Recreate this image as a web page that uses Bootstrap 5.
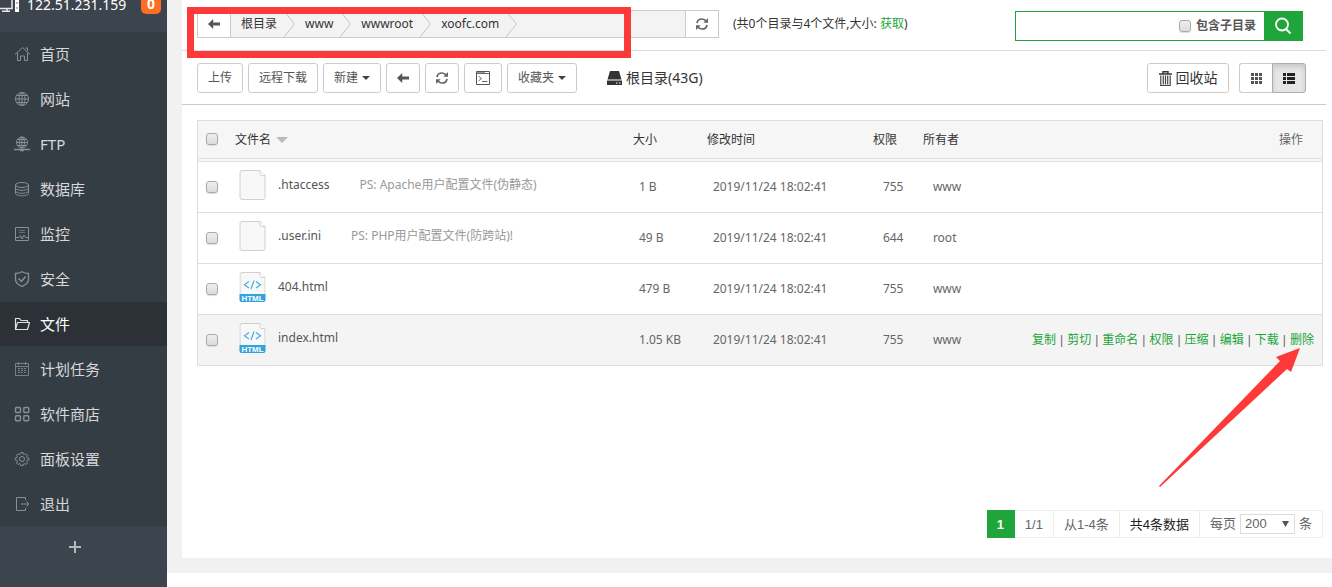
<!DOCTYPE html>
<html lang="zh-CN">
<head>
<meta charset="utf-8">
<meta name="viewport" content="width=device-width, initial-scale=1">
<title>文件</title>
<link rel="stylesheet" href="https://cdn.jsdelivr.net/npm/bootstrap@5.3.0/dist/css/bootstrap.min.css">
<style>
:root{--green:#20a53a;--line:#ddd}
body{font-family:"Noto Sans","Noto Sans CJK SC",sans-serif;font-size:12px;line-height:18px;color:#333;background:#fff}
svg{display:block;flex:none}
a{text-decoration:none}
/* sidebar */
.side{width:167px;flex:none;background:#3c444d;overflow:hidden}
.side-head{height:32px;color:#fff;font-size:14px;line-height:10px}
.side-head .host{margin-left:7px}
.msg-count{width:20px;height:20px;line-height:20px;border-radius:5px;background:#ff6c23;font-weight:700;text-align:center;margin:-6px 6px 0 auto}
.side-menu{background:#353d44;gap:1px}
.side-menu a{height:44px;padding-left:14px;gap:10px;color:#d6d7d9;font-size:15px;line-height:24px}
.side-menu a.active{background:#2c3138;color:#fff}
.side-menu svg{width:16px;height:16px;fill:none;stroke:#8b8f93}
.side-menu a.active svg{stroke:#e0e0e0}
.add-btn{height:42px;width:149px;background:none;border:0;padding:0;color:#b5b8bb}
/* main */
.main-area{background:#f1f1f1;padding:0 0 15px 15px;margin-bottom:14px;min-width:0}
.panel{background:#fff;padding-bottom:20px}
.bar{margin-right:6px;padding-left:15px}
.path-bar{height:51px;border-bottom:1px solid var(--line);padding-top:10px;padding-right:23px}
.tool-bar{height:54px;border-bottom:1px solid #ccc;padding-top:12px;padding-right:20px}
.path-box{width:522px;height:28px;border:1px solid #ccc;background:#f3f3f3}
.path-box button{width:33px;border:0;background:#fff;padding:0}
.path-box .go-up{border-right:1px solid #ccc}
.path-box .reload{border-left:1px solid #ccc}
.crumb{color:#333;padding:0 7px 0 10px}
.frame-mark{position:absolute;left:-11px;top:-4px;width:444px;height:51px;border:7px solid #fd3939;pointer-events:none}
.green{color:var(--green)}
.path-info{margin:5px 0 0 14px}
.search-box{width:288px;height:30px;margin-top:1px;border:1px solid var(--green)}
.search-box input[type=search]{border:0;outline:0;min-width:0;width:0;padding:0 6px}
.search-box label{font-weight:700;color:#555;margin:0 8px 0 5px}
.search-box button{width:38px;flex:none;border:0;padding:0;background:var(--green)}
.tool-set{gap:5px}
.tool{height:30px;padding:0 10px;border:1px solid #ccc;border-radius:3px;background:#fff;color:#555;font-size:12px;line-height:18px;display:inline-flex;align-items:center;justify-content:center;gap:4px}
.tool:hover{background:#eee;border-color:#bbb}
.tool.sq{width:34px;padding:0}
.tool.term{width:38px;padding:0}
.tool.big{font-size:14px;color:#333;padding:0;width:82px;margin-right:10px}
.tool.on{background:#e6e6e6;border-color:#adadad;box-shadow:inset 0 3px 5px rgba(0,0,0,.125)}
.tool.grid-view{width:33px}
.caret{width:0;border:4px solid transparent;border-top-color:#444;border-bottom:0}
.disk{margin-left:30px;font-size:14px;gap:4px;height:30px}
.tick{appearance:none;width:12px;height:12px;margin:0;border:1px solid #aaa;border-radius:3px;background:linear-gradient(#eee,#dcdcdc);display:block;flex:none;box-shadow:0 1px 1px #ddd}
.tick:checked{background:#777}
/* file table */
.file-wrap{margin:15px 9px 20px 15px}
.file-list{width:100%;table-layout:fixed;border-collapse:separate;border-spacing:0;border:1px solid var(--line)}
.file-list th{height:41px;padding:0 8px;font-weight:400;background:#f6f6f6;border-bottom:4px double #e2e2e2}
.file-list td{height:51px;padding:0 8px;color:#666;border-bottom:1px solid var(--line)}
.file-list tr:last-child td{border-bottom:0;height:50px;background:#f4f4f4}
.file-list td:nth-child(2){padding:0 8px 4px 12px}
.file-list td:nth-child(1){padding-bottom:1px}
.file-list th:nth-child(1){padding-bottom:1px}
.file-list td:nth-child(3),.file-list td:nth-child(4){padding-left:14px}
.file-list td:nth-child(5),.file-list td:nth-child(6){padding-left:18px}
.file-list th:last-child{color:#666;padding-right:19px}
.c-tick{width:29px}.c-name{width:35.4%}.c-size{width:74px}.c-time{width:166px}.c-mode{width:50px}.c-own{width:60px}
.head-name{gap:5px}
.sort{width:0;border:6px solid transparent;border-top-color:#bbb;border-bottom:0}
.fname{color:#555;margin:0 30px 0 12px}
.note{color:#999}
.acts i{font:12px/18px "Liberation Sans",sans-serif;margin:0 4px}
.arrow-mark{position:absolute;right:22px;bottom:-122px;pointer-events:none}
/* pager */
.pager{margin-right:9px;height:28px;font:13px/28px "Liberation Sans","Noto Sans CJK SC",sans-serif;color:#666}
.pager>span{border:1px solid #ececec;border-left:0;padding:0 10px}
.pager>.cur{background:var(--green);border-color:var(--green);color:#fff;font-weight:700}
.pager .total{color:#222}
.pager select{appearance:none;width:55px;height:20px;border:1px solid #ddd;padding:0 4px;margin:0 4px;font:inherit;line-height:18px;color:#666;background:#fff}
.pick{position:relative}
.pick svg{position:absolute;right:10px;top:7px;pointer-events:none}
</style>
</head>
<body>
<svg class="d-none" xmlns="http://www.w3.org/2000/svg">
  <symbol id="i-left" viewBox="0 0 12 10"><path d="M0 5 5.2 0v3.5H12v3H5.2V10z" fill="#555"/></symbol>
  <symbol id="i-reload" viewBox="0 0 14 14"><g fill="none" stroke="#666" stroke-width="1.7"><path d="M2 6.2C2.300 3.700 4.500 2 7 2c1.900 0 3.300.9 4.200 2.300M12 7.800C11.700 10.300 9.500 12 7 12c-1.900 0-3.300-.9-4.200-2.300"/></g><path d="M13 1v4.800H8.300zM1 13V8.200h4.700z" fill="#666"/></symbol>
  <symbol id="i-file" viewBox="0 0 26 30"><path d="M2.500.5h18l5 5v22a2 2 0 0 1-2 2h-21a2 2 0 0 1-2-2v-25a2 2 0 0 1 2-2z" fill="#f8f8f8" stroke="#d0d0d0"/><path d="M20.500.5v3a2 2 0 0 0 2 2h3" fill="#fff" stroke="#d0d0d0"/></symbol>
  <symbol id="i-code" viewBox="0 0 26 30"><use href="#i-file"/><path d="M0 22h26v6a2 2 0 0 1-2 2H2a2 2 0 0 1-2-2z" fill="#33a3dc"/><path d="M9.500 9.500 5 12.800l4.500 3.300M16.500 9.500l4.500 3.300-4.500 3.300M14.500 8.500l-3 8.500" fill="none" stroke="#45aee0" stroke-width="1.200"/><text x="13" y="29" text-anchor="middle" font-family="Liberation Sans, sans-serif" font-size="8" font-weight="700" fill="#fff">HTML</text></symbol>
</svg>
<div class="d-flex min-vh-100">
  <nav class="side">
    <div class="side-head d-flex align-items-start">
      <svg width="20" height="12" viewBox="0 0 20 12"><g fill="none" stroke="#e8e8e8" stroke-width="1.500"><path d="M0 8.500h12V0M7 8v3M2 11.200h8"/></g><path d="M15 0h4v12h-4z" fill="#fff"/><path d="M16 3h2M16 8h2" stroke="#777"/></svg>
      <span class="host">122.51.231.159</span>
      <span class="msg-count">0</span>
    </div>
    <div class="side-menu d-flex flex-column">
      <a class="d-flex align-items-center" href="#"><svg viewBox="0 0 16 16"><path d="M1 8.500 8.500 1.500 16 8.500M3.500 7v7.500h3V10h4v4.500h3V7M11.500 2h2v3"/></svg>首页</a>
      <a class="d-flex align-items-center" href="#"><svg viewBox="0 0 16 16"><circle cx="8" cy="8" r="6.500"/><ellipse cx="8" cy="8" rx="3" ry="6.500"/><path d="M8 1.500v13M1.500 8h13M2.500 4.500h11M2.500 11.500h11"/></svg>网站</a>
      <a class="d-flex align-items-center" href="#"><svg viewBox="0 0 16 16"><circle cx="8" cy="6.500" r="5.500"/><ellipse cx="8" cy="6.500" rx="2.500" ry="5.500"/><path d="M8 1v11M2.500 6.500h11M3.500 3.500h9M3.500 9.500h9"/><path d="M0 13.500h16M6 14.500h4" stroke-width="1.500"/></svg>FTP</a>
      <a class="d-flex align-items-center" href="#"><svg viewBox="0 0 16 16"><ellipse cx="8" cy="4" rx="6.500" ry="2.500"/><path d="M1.500 4v8.500c0 1.300 3 2.300 6.500 2.300s6.500-1 6.500-2.300V4M1.500 7c0 1.300 3 2.300 6.500 2.300s6.500-1 6.500-2.300M1.500 10c0 1.300 3 2.300 6.500 2.300s6.500-1 6.500-2.300"/></svg>数据库</a>
      <a class="d-flex align-items-center" href="#"><svg viewBox="0 0 16 16"><path d="M1.500 1.500h13v13h-13z"/><path d="M5 4.500h6M5 6.500h6" opacity=".6"/><path d="M2 11.500h3l1.500-2L8 13l2-4 1.500 2.500H14"/></svg>监控</a>
      <a class="d-flex align-items-center" href="#"><svg viewBox="0 0 16 16"><path d="M8 .8c2 1.300 4.300 1.700 6.500 1.700v5.800c0 3-2.800 5.600-6.500 7.200-3.700-1.600-6.500-4.200-6.500-7.200V2.500C3.700 2.500 6 2.100 8 .8z" stroke-width="1.300"/><path d="m4.500 7.500 3 3 4-5" stroke-width="1.500"/></svg>安全</a>
      <a class="d-flex align-items-center active" href="#" aria-current="page"><svg viewBox="0 0 16 16"><path d="M1.500 13.500v-11h4l1.500 2h6.500v2M1.500 13.500l2-7h12l-2 7z" stroke-linejoin="round" stroke-width="1.200"/></svg>文件</a>
      <a class="d-flex align-items-center" href="#"><svg viewBox="0 0 16 16"><path d="M1.500 2.500h13v12h-13zM1.500 5.500h13M4.500 1v3M11.500 1v3" opacity=".8"/><path d="M4 7.500h9M4 9.500h9M4 11.500h9" stroke-dasharray="2 1" opacity=".8"/></svg>计划任务</a>
      <a class="d-flex align-items-center" href="#"><svg viewBox="0 0 16 16"><g stroke-width="1.400"><rect x="1.500" y="1.500" width="5" height="5" rx="1"/><rect x="9.800" y="1.500" width="5" height="5" rx="1"/><rect x="1.500" y="9.800" width="5" height="5" rx="1"/><rect x="9.800" y="9.800" width="5" height="5" rx="1"/></g></svg>软件商店</a>
      <a class="d-flex align-items-center" href="#"><svg viewBox="0 0 16 16"><circle cx="8" cy="8" r="2.500"/><path d="M6.900 1.500h2.200l.4 1.700 1 .4 1.500-.9 1.500 1.500-.9 1.500.4 1 1.700.4v2l-1.700.4-.4 1 .9 1.500-1.500 1.500-1.500-.9-1 .4-.4 1.600H6.900l-.4-1.600-1-.4-1.500.9-1.500-1.500.9-1.500-.4-1-1.700-.4v-2l1.700-.4.4-1-.9-1.500L4 2.700l1.500.9 1-.4z"/></svg>面板设置</a>
      <a class="d-flex align-items-center" href="#"><svg viewBox="0 0 16 16"><path d="M11.500 4V1.500h-9v13h9V12M7 8h8M12.500 5.500 15 8l-2.500 2.500"/></svg>退出</a>
    </div>
    <button class="add-btn d-flex align-items-center justify-content-center" type="button" aria-label="添加"><svg width="14" height="14" viewBox="0 0 14 14"><path d="M7 1v12M1 7h12" stroke="currentColor" stroke-width="2"/></svg></button>
  </nav>

  <main class="main-area flex-grow-1 d-flex flex-column">
    <div class="panel flex-grow-1 d-flex flex-column">
      <div class="bar path-bar d-flex align-items-start">
        <div class="path-box d-flex position-relative flex-shrink-0">
          <button class="go-up d-flex align-items-center justify-content-center" type="button" aria-label="返回"><svg width="12" height="10"><use href="#i-left"/></svg></button>
          <nav class="d-flex align-items-center flex-grow-1" aria-label="路径">
            <a class="crumb" href="#">根目录</a><svg width="11" height="26" viewBox="0 0 11 26"><path d="M0 0 10.500 13 0 26" fill="none" stroke="#c4c4d0"/></svg>
            <a class="crumb" href="#">www</a><svg width="11" height="26" viewBox="0 0 11 26"><path d="M0 0 10.500 13 0 26" fill="none" stroke="#c4c4d0"/></svg>
            <a class="crumb" href="#">wwwroot</a><svg width="11" height="26" viewBox="0 0 11 26"><path d="M0 0 10.500 13 0 26" fill="none" stroke="#c4c4d0"/></svg>
            <a class="crumb" href="#">xoofc.com</a><svg width="11" height="26" viewBox="0 0 11 26"><path d="M0 0 10.500 13 0 26" fill="none" stroke="#c4c4d0"/></svg>
          </nav>
          <button class="reload d-flex align-items-center justify-content-center" type="button" aria-label="刷新"><svg width="14" height="14"><use href="#i-reload"/></svg></button>
          <div class="frame-mark"></div>
        </div>
        <div class="path-info text-nowrap">(共0个目录与4个文件,大小: <a class="green" href="#">获取</a>)</div>
        <form class="search-box d-flex align-items-center ms-auto">
          <input class="flex-grow-1" type="search" aria-label="搜索">
          <input class="tick" type="checkbox" id="sub"><label class="text-nowrap" for="sub">包含子目录</label>
          <button class="align-self-stretch d-flex align-items-center justify-content-center" type="button" aria-label="搜索"><svg width="18" height="18" viewBox="0 0 18 18"><circle cx="8" cy="7.500" r="6" fill="none" stroke="#fff" stroke-width="1.800"/><path d="m12 12 4.500 4.500" stroke="#fff" stroke-width="2"/></svg></button>
        </form>
      </div>

      <div class="bar tool-bar d-flex align-items-start">
        <div class="tool-set d-flex text-nowrap">
          <button class="tool" type="button">上传</button>
          <button class="tool" type="button">远程下载</button>
          <button class="tool" type="button">新建<span class="caret"></span></button>
          <button class="tool sq" type="button" aria-label="返回"><svg width="12" height="10"><use href="#i-left"/></svg></button>
          <button class="tool sq" type="button" aria-label="刷新"><svg width="14" height="14"><use href="#i-reload"/></svg></button>
          <button class="tool term" type="button" aria-label="终端"><svg width="14" height="14" viewBox="0 0 14 14"><path d="M.5.500h13v13H.5z" fill="none" stroke="#555"/><path d="M1 2.500h12" stroke="#666"/><path d="M1 1.500h8" stroke="#999"/><path d="m2.500 5 3 2.500-3 2.500M6 10.500h5.500" fill="none" stroke="#666"/></svg></button>
          <button class="tool" type="button">收藏夹<span class="caret"></span></button>
        </div>
        <div class="disk d-flex align-items-center"><svg width="15" height="14" viewBox="0 0 15 14"><path d="M3 0h9l2.500 8.500H.5zM0 9.500h15V14H0z" fill="#333"/><path d="M9 12h1.500M12 12h1.500" stroke="#fff"/></svg>根目录(43G)</div>
        <button class="tool big ms-auto" type="button"><svg width="13" height="15" viewBox="0 0 13 15"><path d="M4 2.500V.7h5v1.800M0 3h13" fill="none" stroke="#333" stroke-width="1.400"/><path d="M1.800 4.500v10h9.400v-10M4.300 4.500v9M6.500 4.500v9M8.700 4.500v9" fill="none" stroke="#444" stroke-width="1.200"/></svg>回收站</button>
        <div class="d-flex">
          <button class="tool sq grid-view rounded-end-0 border-end-0" type="button" aria-label="图标视图"><svg width="11" height="11" viewBox="0 0 11 11"><path d="M0 0h3v3H0zM4 0h3v3H4zM8 0h3v3H8zM0 4h3v3H0zM4 4h3v3H4zM8 4h3v3H8zM0 8h3v3H0zM4 8h3v3H4zM8 8h3v3H8z" fill="#555"/></svg></button>
          <button class="tool sq on rounded-start-0" type="button" aria-label="列表视图"><svg width="12" height="11" viewBox="0 0 12 11"><path d="M0 0h3v3H0zM4 0h8v3H4zM0 4h3v3H0zM4 4h8v3H4zM0 8h3v3H0zM4 8h8v3H4z" fill="#222"/></svg></button>
        </div>
      </div>

      <div class="file-wrap position-relative">
        <table class="file-list">
          <colgroup><col class="c-tick"><col class="c-name"><col class="c-size"><col class="c-time"><col class="c-mode"><col class="c-own"><col></colgroup>
          <thead>
            <tr><th><input class="tick" type="checkbox" aria-label="全选"></th><th><span class="head-name d-flex align-items-center">文件名<span class="sort"></span></span></th><th>大小</th><th>修改时间</th><th>权限</th><th>所有者</th><th class="text-end">操作</th></tr>
          </thead>
          <tbody>
            <tr><td><input class="tick" type="checkbox" aria-label=".htaccess"></td><td><div class="d-flex align-items-center"><svg width="27" height="30"><use href="#i-file"/></svg><span class="fname">.htaccess</span><span class="note">PS: Apache用户配置文件(伪静态)</span></div></td><td>1 B</td><td>2019/11/24 18:02:41</td><td>755</td><td>www</td><td></td></tr>
            <tr><td><input class="tick" type="checkbox" aria-label=".user.ini"></td><td><div class="d-flex align-items-center"><svg width="27" height="30"><use href="#i-file"/></svg><span class="fname">.user.ini</span><span class="note">PS: PHP用户配置文件(防跨站)!</span></div></td><td>49 B</td><td>2019/11/24 18:02:41</td><td>644</td><td>root</td><td></td></tr>
            <tr><td><input class="tick" type="checkbox" aria-label="404.html"></td><td><div class="d-flex align-items-center"><svg width="27" height="30"><use href="#i-code"/></svg><span class="fname">404.html</span></div></td><td>479 B</td><td>2019/11/24 18:02:41</td><td>755</td><td>www</td><td></td></tr>
            <tr><td><input class="tick" type="checkbox" aria-label="index.html"></td><td><div class="d-flex align-items-center"><svg width="27" height="30"><use href="#i-code"/></svg><span class="fname">index.html</span></div></td><td>1.05 KB</td><td>2019/11/24 18:02:41</td><td>755</td><td>www</td><td><div class="acts d-flex justify-content-end text-nowrap"><a class="green" href="#">复制</a><i>|</i><a class="green" href="#">剪切</a><i>|</i><a class="green" href="#">重命名</a><i>|</i><a class="green" href="#">权限</a><i>|</i><a class="green" href="#">压缩</a><i>|</i><a class="green" href="#">编辑</a><i>|</i><a class="green" href="#">下载</a><i>|</i><a class="green" href="#">删除</a></div></td></tr>
          </tbody>
        </table>
        <svg class="arrow-mark" width="143" height="141" viewBox="0 0 143 141"><path d="M142 1 118 10l4 4L1 139l1 1L129 22l4 3z" fill="#fd3939"/></svg>
      </div>

      <div class="pager d-flex justify-content-end text-nowrap mt-auto">
        <span class="cur">1</span><span>1/1</span><span>从1-4条</span><span class="total">共4条数据</span>
        <span class="d-flex align-items-center">每页<span class="pick d-flex"><select aria-label="每页条数"><option>200</option><option>100</option></select><svg width="7" height="6" viewBox="0 0 7 6"><path d="M0 0h7L3.500 6z" fill="#555"/></svg></span>条</span>
      </div>
    </div>
  </main>
</div>
<script src="https://cdn.jsdelivr.net/npm/bootstrap@5.3.0/dist/js/bootstrap.bundle.min.js"></script>
</body>
</html>
